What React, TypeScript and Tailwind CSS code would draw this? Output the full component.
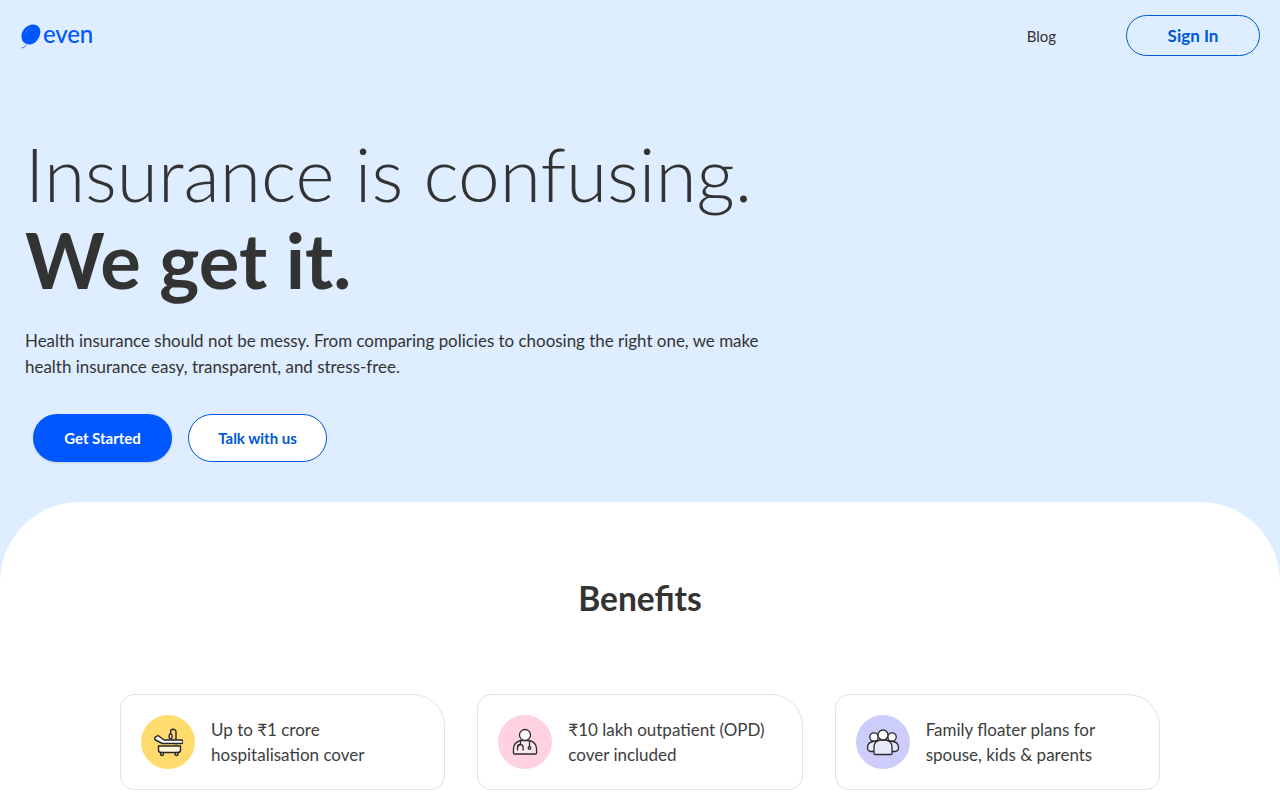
const font = { fontFamily: '"Lato", "Noto Sans", sans-serif' };

function BathIcon() {
  return (
    <svg width="30" height="30" viewBox="0 0 30 30" fill="none" stroke="#262626" strokeWidth="1.4" strokeLinecap="round" strokeLinejoin="round">
      <path d="M23 17V5a2.700 2.700 0 0 0-5.400 0v2" />
      <rect x="16.200" y="7" width="2.800" height="4.800" rx="1.400" fill="#fff" />
      <path d="M5.500 19v4a2.500 2.500 0 0 0 2.500 2.500h17a2.500 2.500 0 0 0 2.500-2.500v-4z" fill="#fff6d8" />
      <path d="M2.200 10.200l2.800-1.700 6 4.500h17.300a1.500 1.500 0 0 1 0 3.500H9.500L2.500 13a2 2 0 0 1-.3-2.800z" fill="#fff" />
      <circle cx="9" cy="27" r="1.500" fill="#fff" />
      <circle cx="23.500" cy="27" r="1.500" fill="#fff" />
    </svg>
  );
}

function DoctorIcon() {
  return (
    <svg width="30" height="30" viewBox="0 0 30 30" fill="none" stroke="#2b2b2b" strokeWidth="1.3" strokeLinecap="round" strokeLinejoin="round">
      <path d="M3.500 26v-4.500c0-4.500 3.500-7 7.500-8h8c4 1 7.500 3.500 7.500 8V26a1 1 0 0 1-1 1h-21a1 1 0 0 1-1-1z" fill="#fde7f0" />
      <circle cx="15" cy="8" r="5.500" fill="#fff" />
      <path d="M10.500 14v3.500a3 3 0 0 0-3 3V23" />
      <path d="M7.500 20.500a2.800 2.800 0 0 1 5.600 0V23" />
      <path d="M19.500 14v5.500" />
      <circle cx="19.500" cy="21" r="1.300" />
    </svg>
  );
}

function FamilyIcon() {
  return (
    <svg width="34" height="30" viewBox="0 0 34 30" fill="none" stroke="#2b2b2b" strokeWidth="1.3" strokeLinecap="round" strokeLinejoin="round">
      <circle cx="8" cy="10" r="4.200" fill="#fff" />
      <circle cx="26" cy="10" r="4.200" fill="#fff" />
      <path d="M7 14.500c-3.500.5-5.500 3-5.500 6.500 0 2 1 3.200 3.500 3.500h5v-10z" fill="#e8e8fb" />
      <path d="M27 14.500c3.500.5 5.500 3 5.500 6.500 0 2-1 3.200-3.500 3.500h-5v-10z" fill="#e8e8fb" />
      <path d="M8 26.500v-7c0-3.500 3-6 6-6.500h6c3 .5 6 3 6 6.500v7a1 1 0 0 1-1 1H9a1 1 0 0 1-1-1z" fill="#e8e8fb" />
      <circle cx="17" cy="8" r="5" fill="#fff" />
    </svg>
  );
}

const benefits = [
  { lines: ["Up to ₹1 crore", "hospitalisation cover"], color: "bg-[#ffdb6e]", icon: <BathIcon /> },
  { lines: ["₹10 lakh outpatient (OPD)", "cover included"], color: "bg-[#ffd1e3]", icon: <DoctorIcon /> },
  { lines: ["Family floater plans for", "spouse, kids & parents"], color: "bg-[#cdcdfb]", icon: <FamilyIcon /> },
];

export default function App() {
  return (
    <div className="h-[800px] overflow-hidden bg-[#deedff] text-[#333333]" style={font}>
      <header className="flex h-[70px] items-start justify-between pl-[20px] pr-5 pt-[15px]">
        <div className="flex items-center pt-[6px]">
          <svg width="23" height="25" viewBox="0 0 23 25">
            <path d="M13 .500c4.600 0 7.800 3.300 7.300 8-.5 5.500-4.800 11.500-10 12C5 21 1 17 1.500 11.500 2 5.500 7.300 .500 13 .500z" fill="#0057ff" />
            <path d="M10 3.500c-2 1-3.500 3-4 5.500" fill="none" stroke="#4d8cff" strokeWidth="0.8" strokeLinecap="round" />
            <path d="M6 21c-.5 1.500-2 2.500-4.500 3" fill="none" stroke="#0057ff" strokeWidth="0.8" />
          </svg>
          <span className="pb-[6px] text-[24px] leading-[25px] font-medium tracking-[-0.2px] text-[#0057ff]">even</span>
        </div>
        <div className="flex items-start">
          <a className="mt-[12px] text-[15px] leading-[18px]">Blog</a>
          <button className="ml-[70px] h-[41px] w-[134px] rounded-full border border-[#0057d9] text-[17px] font-bold text-[#0057d9]">Sign In</button>
        </div>
      </header>
      <main>
        <section className="h-[432px] pl-[25px] pt-[60px]">
          <h1 className="text-[74.800px] leading-[86px] font-light">Insurance is confusing.</h1>
          <p className="text-[76px] leading-[87px] font-bold">We get it.</p>
          <p className="mt-[25px] w-[760px] text-[16.950px] leading-[26px]">
            Health insurance should not be messy. From comparing policies to choosing the right one, we make health insurance easy, transparent, and stress-free.
          </p>
          <div className="mt-[34px] flex gap-4 pl-2">
            <button className="h-[48px] w-[139px] rounded-full bg-[#0057ff] text-[15px] font-bold text-white shadow-sm">Get Started</button>
            <button className="h-[48px] w-[139px] rounded-full border border-[#0057d9] bg-white text-[15px] font-bold text-[#0057d9]">Talk with us</button>
          </div>
        </section>
        <section className="h-[298px] rounded-t-[80px] bg-white px-[120px] pt-[76px]">
          <h2 className="text-center text-[33.500px] leading-[40px] font-bold">Benefits</h2>
          <div className="mt-[76px] grid grid-cols-3 gap-[32px]">
            {benefits.map((b) => (
              <div key={b.lines[0]} className="flex h-[96px] items-center gap-4 rounded-[14px] rounded-tr-[32px] border border-[#e2e2e2] pl-5">
                <div className={`flex h-[54px] w-[54px] shrink-0 items-center justify-center rounded-full ${b.color}`}>{b.icon}</div>
                <p className="text-[17px] leading-[25px] text-[#3d3d3d]">
                  {b.lines[0]}
                  <br />
                  {b.lines[1]}
                </p>
              </div>
            ))}
          </div>
        </section>
      </main>
    </div>
  );
}
